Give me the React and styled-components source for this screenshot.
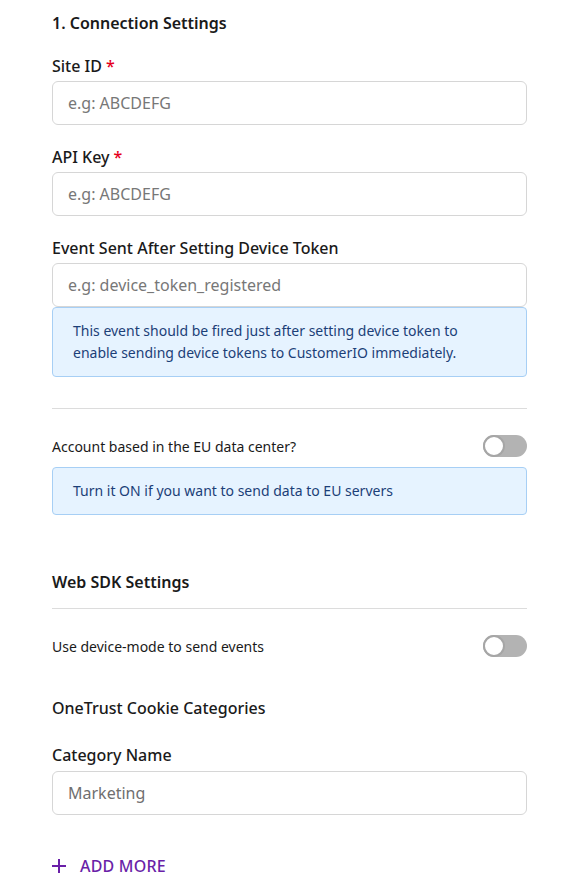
import styled, { createGlobalStyle } from "styled-components";

//styling

const GlobalStyle = createGlobalStyle`
  body {
    margin: 0;
    background: #ffffff;
    font-family: "Noto Sans", "Open Sans", sans-serif;
    color: #1a1a1a;
  }
  * { box-sizing: border-box; }
`;

const Page = styled.div`
  width: 580px;
  padding: 11px 53px 0 52px;
  display: flex;
  flex-direction: column;
`;

const SectionTitle = styled.h2`
  margin: ${(p) => p.$mt || 0}px 0 0;
  font-size: 16px;
  line-height: 24px;
  font-weight: 600;
  color: #1a1a1a;
`;

const SubTitle = styled.h3`
  margin: ${(p) => p.$mt || 0}px 0 0;
  font-size: 16px;
  line-height: 24px;
  font-weight: 500;
  color: #1a1a1a;
`;

const Field = styled.div`
  display: flex;
  flex-direction: column;
  margin-top: ${(p) => p.$mt || 20}px;
`;

const Label = styled.label`
  font-size: 16px;
  line-height: 24px;
  font-weight: 500;
  margin-bottom: ${(p) => p.$mb || 3}px;
  color: #1a1a1a;
`;

const Required = styled.span`
  color: #e5001c;
  margin-left: 4px;
`;

const Input = styled.input`
  height: 44px;
  width: 100%;
  border: 1px solid #d6d6d6;
  border-radius: 6px;
  padding: 0 15px;
  font-family: inherit;
  font-size: 16px;
  color: #6f6f6f;
  background: #fff;
  outline: none;

  &::placeholder {
    color: #777777;
  }
`;

const Note = styled.div`
  margin-top: ${(p) => p.$mt || 0}px;
  background: #e6f3ff;
  border: 1px solid #a7cff5;
  border-radius: 4px;
  padding: 12px 50px 12px 20px;
  font-size: 14px;
  line-height: 22px;
  color: #1c3f78;
`;

const Divider = styled.hr`
  margin: ${(p) => p.$mt || 0}px 0 0;
  border: none;
  border-top: 1px solid #dcdcdc;
`;

const ToggleRow = styled.div`
  margin-top: ${(p) => p.$mt || 0}px;
  display: flex;
  align-items: center;
  justify-content: space-between;
  height: 22px;
  font-size: 14px;
  color: #1a1a1a;
`;

const Switch = styled.span`
  position: relative;
  width: 44px;
  height: 22px;
  border-radius: 11px;
  background: #b3b3b3;
  flex-shrink: 0;

  &::after {
    content: "";
    position: absolute;
    left: 0;
    top: 0;
    width: 22px;
    height: 22px;
    border-radius: 50%;
    background: #fff;
    border: 2px solid #a6a6a6;
    box-sizing: border-box;
  }
`;

const AddMore = styled.button`
  margin-top: 39px;
  display: flex;
  align-items: center;
  gap: 14px;
  padding: 0;
  border: none;
  background: none;
  font-family: inherit;
  font-size: 16px;
  font-weight: 500;
  color: #6a1fa8;
  letter-spacing: 0.2px;
  cursor: pointer;
  height: 24px;
`;

//component
export default function App() {
  return (
    <>
      <GlobalStyle />
      <Page>
        <SectionTitle>1. Connection Settings</SectionTitle>

        <Field $mt={19}>
          <Label>
            Site ID<Required>*</Required>
          </Label>
          <Input placeholder="e.g: ABCDEFG" />
        </Field>

        <Field>
          <Label>
            API Key<Required>*</Required>
          </Label>
          <Input placeholder="e.g: ABCDEFG" />
        </Field>

        <Field>
          <Label>Event Sent After Setting Device Token</Label>
          <Input placeholder="e.g: device_token_registered" />
          <Note>
            This event should be fired just after setting device token to
            enable sending device tokens to CustomerIO immediately.
          </Note>
        </Field>

        <Divider $mt={31} />
        <ToggleRow $mt={26}>
          Account based in the EU data center?
          <Switch />
        </ToggleRow>
        <Note $mt={10}>Turn it ON if you want to send data to EU servers</Note>

        <SectionTitle $mt={55}>Web SDK Settings</SectionTitle>
        <Divider $mt={14} />
        <ToggleRow $mt={26}>
          Use device-mode to send events
          <Switch />
        </ToggleRow>

        <SubTitle $mt={39}>OneTrust Cookie Categories</SubTitle>
        <Field $mt={23}>
          <Label $mb={4}>Category Name</Label>
          <Input defaultValue="Marketing" />
        </Field>

        <AddMore>
          <svg width="14" height="14" viewBox="0 0 14 14">
            <path d="M7 0v14M0 7h14" stroke="#6a1fa8" strokeWidth="2" />
          </svg>
          ADD MORE
        </AddMore>
      </Page>
    </>
  );
}
